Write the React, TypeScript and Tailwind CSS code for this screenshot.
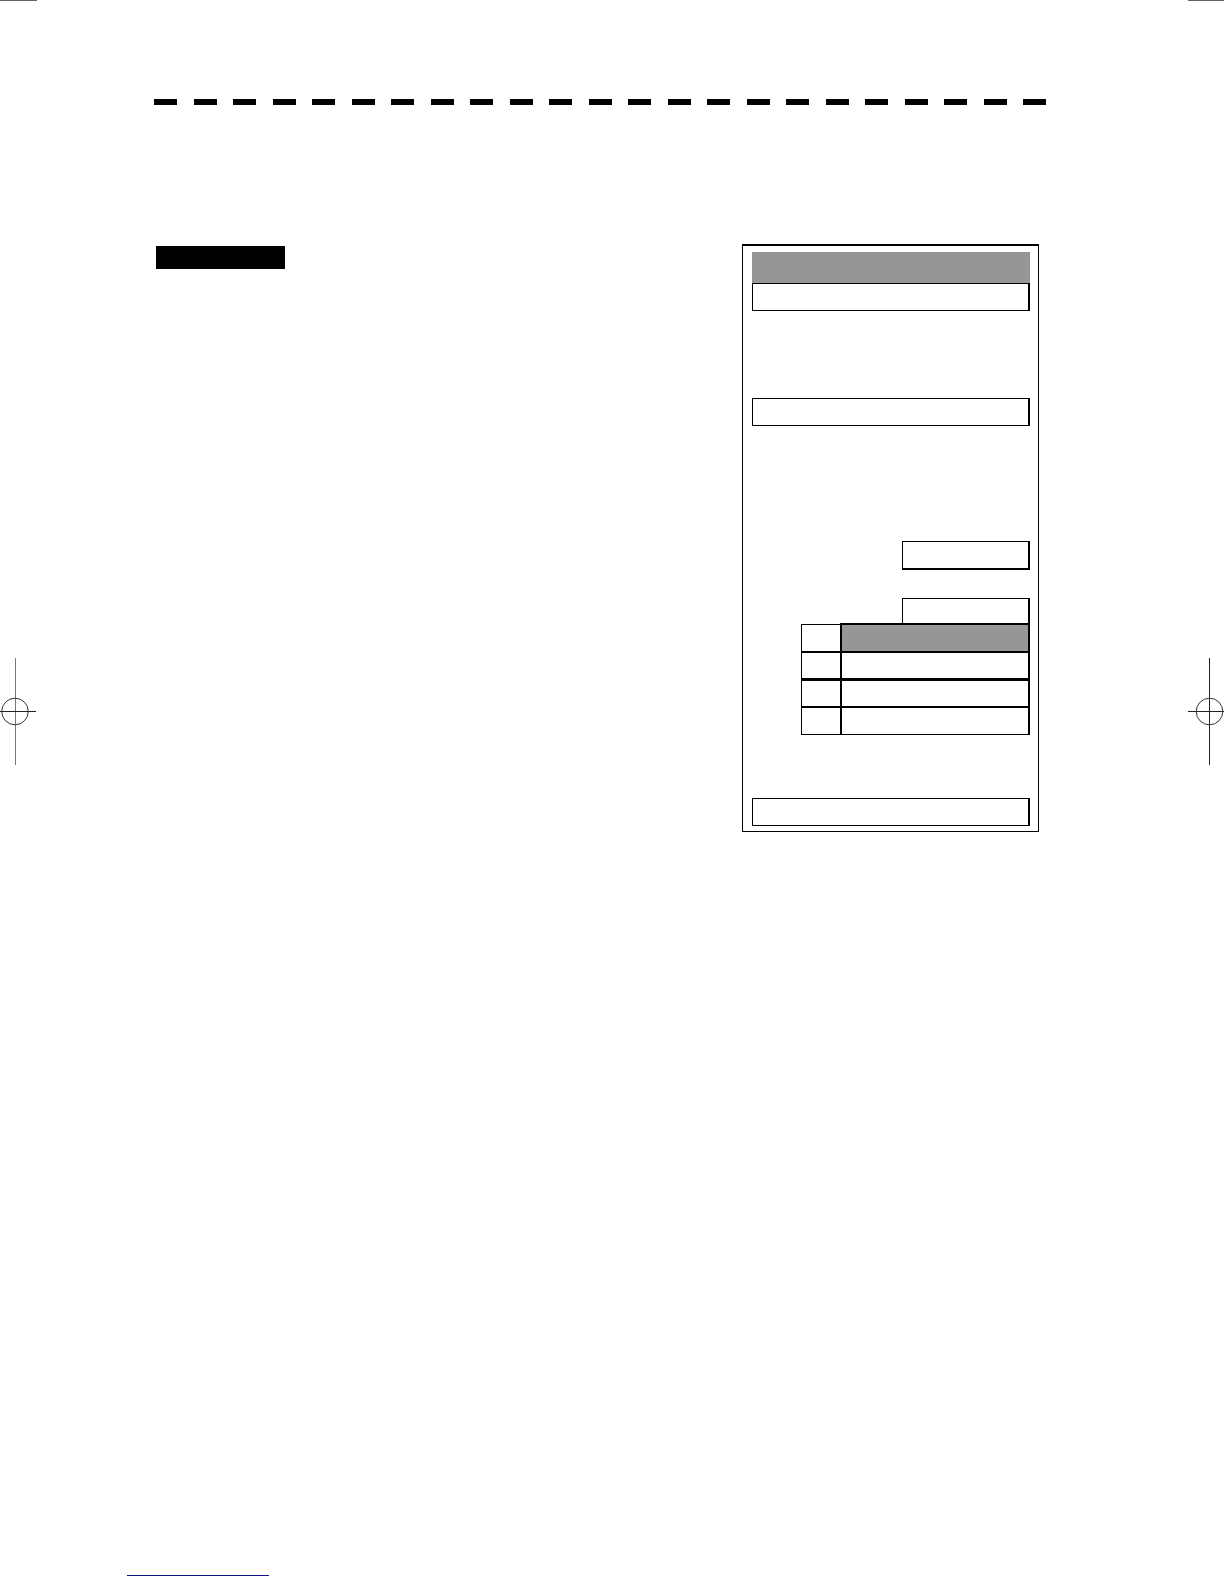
const DASH_COUNT = 23;

const rows = [
  { cell: 'mt-px border-t', bar: 'border-t-2 bg-[#969696]', height: 'h-7' },
  { cell: 'border-t-2', bar: 'border-t-2', height: 'h-[27px]' },
  { cell: 'border-t-3', bar: 'border-t-3', height: 'h-7' },
  { cell: 'border-t-2 border-b', bar: 'border-t-2 border-b', height: 'h-[29px]' },
];

interface RegistrationMarkProps {
  side: 'left' | 'right';
}

function RegistrationMark({ side }: RegistrationMarkProps) {
  const isLeft = side === 'left';
  const cx = isLeft ? 15.5 : 21.5;

  return (
    <svg
      className="block h-[107px] w-full"
      viewBox={isLeft ? '0 0 37 107' : '0 0 36 107'}
      fill="none"
      aria-hidden="true"
    >
      <line x1={cx} y1="0" x2={cx} y2="107" stroke={isLeft ? '#777' : '#222'} />
      <line x1="0" y1="53.5" x2={isLeft ? 36 : 37} y2="53.5" stroke="#222" />
      <circle cx={isLeft ? 15 : 21.5} cy="53.5" r="13.3" stroke="#333" />
    </svg>
  );
}

function PageMargin({ side }: RegistrationMarkProps) {
  return (
    <aside className={side === 'left' ? 'w-[37px] shrink-0' : 'w-9 shrink-0'}>
      {/* Crop mark on the trim edge */}
      <div className="h-px bg-[#636363]" />
      <div className="pt-[657px]">
        <RegistrationMark side={side} />
      </div>
    </aside>
  );
}

function Field() {
  return <div className="h-7 border border-r-2 border-black" />;
}

function DisplayPanel() {
  return (
    <section className="mr-[7px] w-[297px] border border-t-2 border-black pt-1.5 pr-2 pb-[5px] pl-[9px]">
      <div className="h-[31px] bg-[#969696]" />
      <Field />
      <div className="mt-[87px]">
        <Field />
      </div>

      <div className="mt-[115px] ml-auto h-[29px] w-32 border border-r-2 border-b-2 border-black" />
      <div className="mt-7 ml-auto h-[25px] w-32 border border-r-2 border-b-0 border-black" />

      {/* Numbered list: narrow cell and wide bar */}
      <div className="ml-[49px]">
        {rows.map((row, i) => (
          <div key={i} className={`flex ${row.height}`}>
            <div className={`w-[39px] shrink-0 border-l border-black ${row.cell}`} />
            <div className={`flex-1 border-x-2 border-black ${row.bar}`} />
          </div>
        ))}
      </div>

      <div className="mt-[63px]">
        <Field />
      </div>
    </section>
  );
}

export default function App() {
  return (
    <div className="flex min-h-screen bg-white">
      <PageMargin side="left" />

      <div className="flex min-w-0 flex-1 flex-col pb-2">
        <main className="pt-[99px] pr-[142px] pl-[117px]">
          <div className="flex justify-between">
            {Array.from({ length: DASH_COUNT }, (_, i) => (
              <div key={i} className="h-1.5 w-[23px] bg-black" />
            ))}
          </div>

          <div className="mt-[139px] flex items-start justify-between">
            <div className="mt-0.5 ml-0.5 h-[23px] w-[129px] bg-black" />
            <DisplayPanel />
          </div>
        </main>

        <footer className="mt-auto pl-[90px]">
          <div className="h-px w-[142px] bg-[#10108a]" />
        </footer>
      </div>

      <PageMargin side="right" />
    </div>
  );
}
